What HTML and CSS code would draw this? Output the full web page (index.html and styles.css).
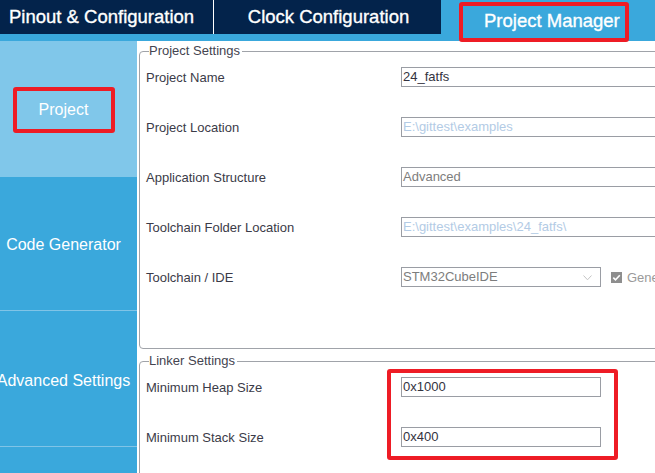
FILE: index.html
```html
<!DOCTYPE html>
<html>
<head>
<meta charset="utf-8">
<link rel="stylesheet" href="styles.css">
</head>
<body>
<div class="app">
  <header class="header">
    <div class="tab tab-pinout">Pinout &amp; Configuration</div>
    <div class="tab tab-clock">Clock Configuration</div>
    <div class="tab-active"><div class="pm-box">Project Manager</div></div>
  </header>
  <div class="main">
    <nav class="sidebar">
      <div class="side-item side-project"><span class="side-mark">Project</span></div>
      <div class="side-item side-code">Code Generator</div>
      <div class="side-item side-adv">Advanced Settings</div>
      <div class="side-item side-more"></div>
    </nav>
    <div class="content">
      <fieldset class="group group-project">
        <legend>Project Settings</legend>
        <div class="rows">
          <div class="label">Project Name</div>
          <div class="field wide">24_fatfs</div>
          <div class="label">Project Location</div>
          <div class="field wide disabled">E:\gittest\examples</div>
          <div class="label">Application Structure</div>
          <div class="field wide grey">Advanced</div>
          <div class="label">Toolchain Folder Location</div>
          <div class="field wide disabled">E:\gittest\examples\24_fatfs\</div>
          <div class="label">Toolchain / IDE</div>
          <div class="ide-row">
            <div class="field select grey">STM32CubeIDE
              <svg class="chev" width="9" height="6" viewBox="0 0 9 6"><path d="M0.5 0.5 L4.5 4.8 L8.5 0.5" fill="none" stroke="#c4c4c4" stroke-width="1"/></svg>
            </div>
            <div class="check">
              <svg width="11" height="11" viewBox="0 0 11 11"><rect width="11" height="11" fill="#8e8e8e"/><path d="M2.3 5.6 L4.5 7.8 L8.8 3.2" fill="none" stroke="#fff" stroke-width="1.6"/></svg>
              <span>Generate Under Root</span>
            </div>
          </div>
        </div>
      </fieldset>
      <fieldset class="group group-linker">
        <legend>Linker Settings</legend>
        <div class="rows">
          <div class="label">Minimum Heap Size</div>
          <div class="field short">0x1000</div>
          <div class="label">Minimum Stack Size</div>
          <div class="field short">0x400</div>
        </div>
        <div class="mark-linker"></div>
      </fieldset>
    </div>
  </div>
</div>
</body>
</html>
```
FILE: styles.css
```css
* { box-sizing: border-box; }
html, body {
  margin: 0;
  padding: 0;
  width: 655px;
  height: 473px;
  overflow: hidden;
  background: #fff;
  font-family: "Liberation Sans", Arial, sans-serif;
}
.app {
  width: 655px;
  height: 473px;
  display: flex;
  flex-direction: column;
  overflow: hidden;
}
.header {
  height: 41px;
  flex: none;
  background: #3aa8dc;
  display: flex;
  align-items: flex-start;
}
.tab {
  height: 34px;
  background: #03234b;
  color: #fff;
  font-size: 18.5px;
  -webkit-text-stroke: 0.35px #fff;
  display: flex;
  align-items: center;
  white-space: nowrap;
}
.tab-pinout {
  width: 214px;
  padding-left: 9px;
  border-right: 1px solid #ffffff;
}
.tab-clock {
  width: 227px;
  justify-content: center;
  padding-left: 2px;
}
.tab-active {
  flex: 1;
  height: 41px;
  padding-left: 18px;
  padding-top: 2px;
}
.pm-box {
  width: 170px;
  height: 40px;
  border: 4px solid #ee1c25;
  border-radius: 3px;
  color: #fff;
  font-size: 18.5px;
  -webkit-text-stroke: 0.35px #fff;
  display: flex;
  align-items: center;
  padding-left: 21px;
  padding-bottom: 3px;
  white-space: nowrap;
}
.main {
  flex: 1;
  display: flex;
  min-height: 0;
}
.sidebar {
  width: 137px;
  flex: none;
  display: flex;
  flex-direction: column;
  background: #3aa8dc;
}
.side-item {
  display: flex;
  align-items: center;
  justify-content: center;
  padding-right: 10px;
  color: #fff;
  font-size: 16px;
  white-space: nowrap;
  flex: none;
}
.side-project {
  height: 136px;
  background: #80c7ea;
  padding-top: 1px;
}
.side-mark {
  display: flex;
  align-items: center;
  justify-content: center;
  width: 102px;
  height: 46px;
  border: 4px solid #ee1c25;
  border-radius: 3px;
}
.side-code {
  height: 134px;
  padding-top: 3px;
  border-bottom: 1px solid #80c4e7;
}
.side-adv {
  height: 136px;
  padding-top: 4px;
  border-bottom: 1px solid #80c4e7;
}
.side-more {
  flex: 1;
}
.content {
  flex: 1;
  min-width: 0;
  overflow: hidden;
  padding-left: 2px;
  padding-top: 2px;
}
.group {
  position: relative;
  width: 620px;
  margin: 0;
  padding: 0 0 0 6px;
  border: 1px solid #a0a3a9;
  border-radius: 4px;
}
.group legend {
  font-size: 13px;
  line-height: 16px;
  color: #444450;
  padding: 0 2px 0 0;
  margin-left: 3px;
}
.group-project {
  height: 306px;
}
.group-linker {
  margin-top: 4px;
  height: 200px;
}
.rows {
  display: grid;
  grid-template-columns: 255px 1fr;
  grid-auto-rows: 20px;
  row-gap: 30px;
  padding-top: 8px;
  align-items: center;
}
.label {
  font-size: 13px;
  color: #3b3b48;
  white-space: nowrap;
}
.field {
  height: 20px;
  border: 1px solid #9a9da4;
  font-size: 13px;
  line-height: 18px;
  padding-left: 1px;
  color: #333340;
  white-space: nowrap;
  background: #fff;
}
.field.wide { width: 330px; }
.field.short { width: 200px; }
.field.disabled { color: #b3cbe5; }
.field.grey { color: #7d7d7d; }
.ide-row {
  display: flex;
  align-items: center;
  height: 20px;
}
.field.select {
  width: 200px;
  position: relative;
}
.chev {
  position: absolute;
  right: 8px;
  top: 7px;
}
.check {
  display: flex;
  align-items: center;
  margin-left: 10px;
  font-size: 13px;
  color: #9a9a9a;
  white-space: nowrap;
}
.check svg { margin-right: 5px; flex: none; }
.mark-linker {
  position: absolute;
  left: 247px;
  top: 0;
  width: 231px;
  height: 91px;
  border: 4px solid #ee1c25;
  border-radius: 3px;
}
```
